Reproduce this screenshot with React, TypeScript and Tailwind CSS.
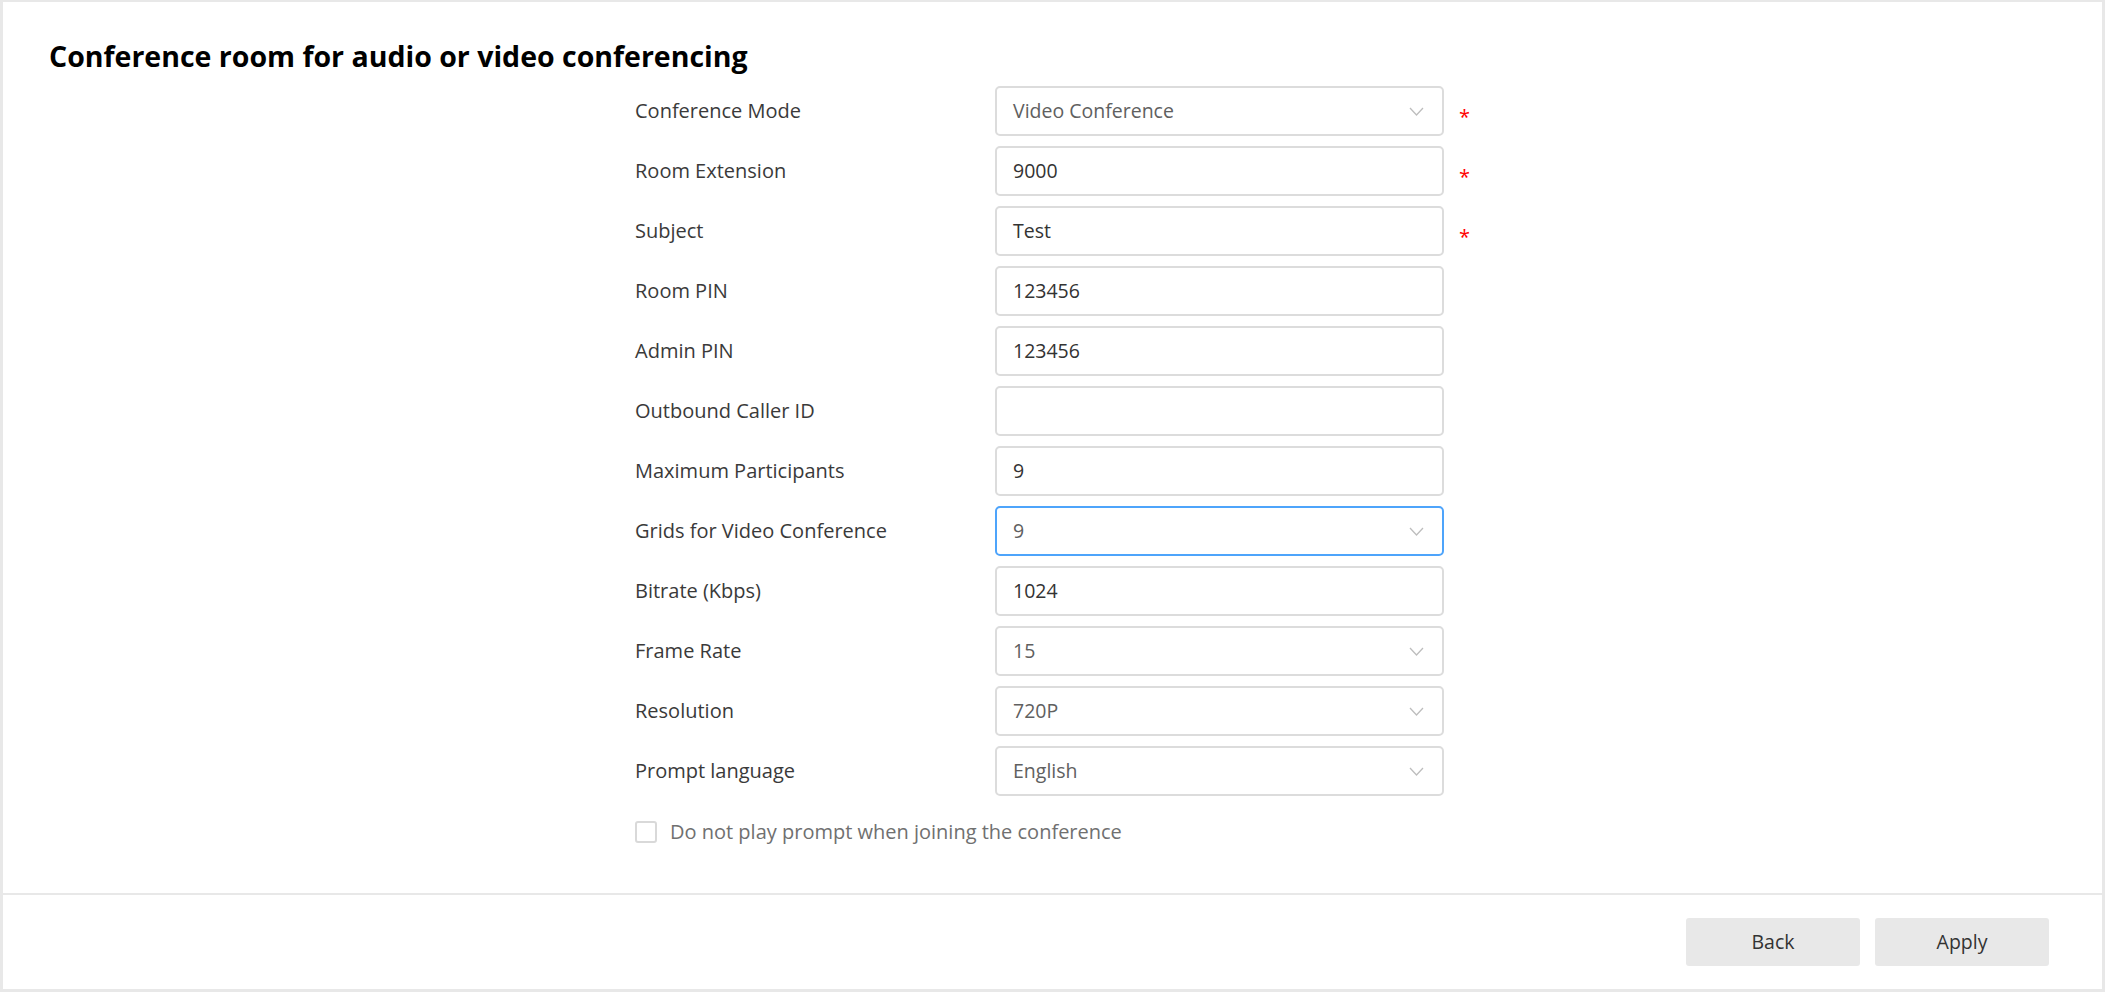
import React from "react";

type Field = {
  label: string;
  value: string;
  kind: "select" | "input";
  required?: boolean;
  focused?: boolean;
};

const fields: Field[] = [
  { label: "Conference Mode", value: "Video Conference", kind: "select", required: true },
  { label: "Room Extension", value: "9000", kind: "input", required: true },
  { label: "Subject", value: "Test", kind: "input", required: true },
  { label: "Room PIN", value: "123456", kind: "input" },
  { label: "Admin PIN", value: "123456", kind: "input" },
  { label: "Outbound Caller ID", value: "", kind: "input" },
  { label: "Maximum Participants", value: "9", kind: "input" },
  { label: "Grids for Video Conference", value: "9", kind: "select", focused: true },
  { label: "Bitrate (Kbps)", value: "1024", kind: "input" },
  { label: "Frame Rate", value: "15", kind: "select" },
  { label: "Resolution", value: "720P", kind: "select" },
  { label: "Prompt language", value: "English", kind: "select" },
];

function Chevron() {
  return (
    <svg width="15" height="9" viewBox="0 0 15 9" fill="none">
      <polyline points="1,1 7.5,8 14,1" stroke="#bdbdbd" strokeWidth="1.3" />
    </svg>
  );
}

function Row({ f }: { f: Field }) {
  return (
    <div className="flex items-center h-[50px]">
      <div className="w-[360px] text-[20px] text-[#3a3a3a]">{f.label}</div>
      <div
        className={
          "w-[449px] h-[50px] rounded-[5px] border-2 flex items-center pl-[16px] pr-[18px] text-[19.5px] " +
          (f.focused ? "border-[#4ea4fb] " : "border-[#dcdcdc] ") +
          (f.kind === "select" ? "text-[#606060]" : "text-[#333333]")
        }
      >
        <span className="flex-1">{f.value}</span>
        {f.kind === "select" && <Chevron />}
      </div>
      {f.required && (
        <span className="ml-[15px] mt-[12px] text-[20px] leading-none text-[#ff0000]">*</span>
      )}
    </div>
  );
}

export default function App() {
  return (
    <div
      className="w-[2105px] h-[992px] bg-[#e8e8e8] pt-[2px] pl-[3px] pr-[3px] pb-[3px]"
      style={{ fontFamily: '"Open Sans", "Noto Sans", sans-serif' }}
    >
      <div className="w-full h-full bg-white flex flex-col">
        <div className="flex-1 flex flex-col">
          <h1 className="pl-[46px] pt-[36px] text-[28.5px] leading-[36px] font-bold text-black">
            Conference room for audio or video conferencing
          </h1>
          <div className="pl-[632px] mt-[12px] flex flex-col gap-[10px]">
            {fields.map((f) => (
              <Row key={f.label} f={f} />
            ))}
            <div className="flex items-center mt-[11px] gap-[13px]">
              <div className="w-[22px] h-[22px] rounded-[3px] border-2 border-[#d9d9d9] bg-white" />
              <span className="text-[20px] text-[#707070]">
                Do not play prompt when joining the conference
              </span>
            </div>
          </div>
        </div>
        <div className="h-[2px] bg-[#e8e8e8]" />
        <div className="h-[94px] flex items-center justify-end gap-[15px] pr-[53px]">
          <button className="w-[174px] h-[48px] rounded-[3px] bg-[#e8e8e8] text-[19.5px] text-[#333333]">
            Back
          </button>
          <button className="w-[174px] h-[48px] rounded-[3px] bg-[#e8e8e8] text-[19.5px] text-[#333333]">
            Apply
          </button>
        </div>
      </div>
    </div>
  );
}
